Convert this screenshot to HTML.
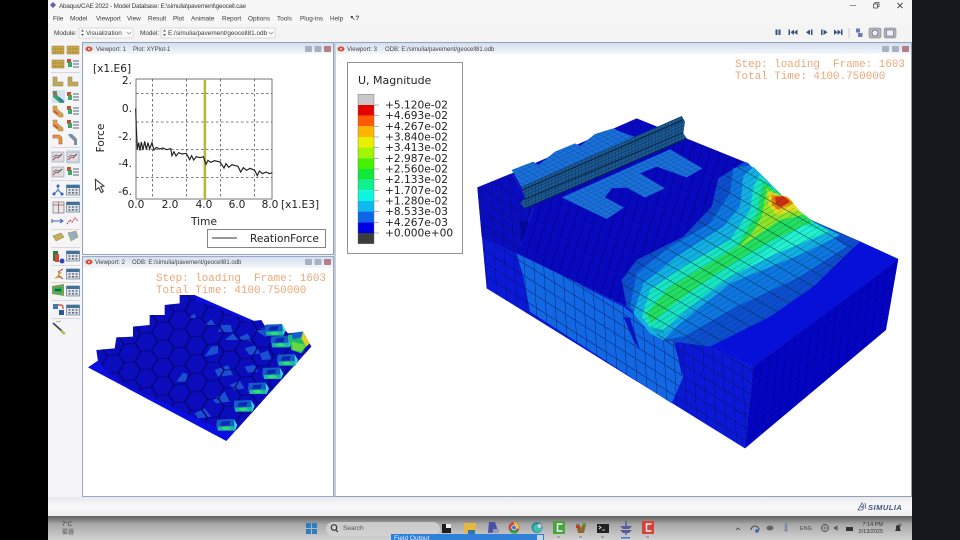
<!DOCTYPE html>
<html><head><meta charset="utf-8"><title>Abaqus/CAE 2022</title>
<style>html,body{margin:0;padding:0;background:#000;width:960px;height:540px;overflow:hidden}svg{display:block;filter:blur(.3px)}
.m{font:6.4px "Liberation Sans",sans-serif;fill:#3a3a3a}
.d{font:10.6px "DejaVu Sans","Liberation Sans",sans-serif;fill:#222}
.o{font:10.9px "Liberation Mono",monospace;fill:#eba878}
.t{font:6px "Liberation Sans",sans-serif;fill:#444}
</style></head><body>
<svg width="960" height="540" viewBox="0 0 960 540" xmlns="http://www.w3.org/2000/svg">
<defs>
<linearGradient id="tb" x1="0" y1="0" x2="0" y2="1"><stop offset="0" stop-color="#d3deee"/><stop offset="1" stop-color="#f4f7fb"/></linearGradient>
<linearGradient id="task" x1="0" y1="0" x2="0" y2="1"><stop offset="0" stop-color="#5f5f5f"/><stop offset=".35" stop-color="#a9a9a9"/><stop offset="1" stop-color="#d2d2d2"/></linearGradient>
<linearGradient id="bot" x1="0" y1="0" x2="0" y2="1"><stop offset="0" stop-color="#e9e9ec"/><stop offset=".5" stop-color="#fafafa"/><stop offset="1" stop-color="#ececec"/></linearGradient>
<pattern id="gL" patternUnits="userSpaceOnUse" width="100" height="100" patternTransform="matrix(.3 .19 .02 .38 50 535)"><path d="M0 0H100M0 0V100" stroke="#021058" stroke-width="9" opacity=".85" fill="none"/></pattern>
<pattern id="gR" patternUnits="userSpaceOnUse" width="100" height="100" patternTransform="matrix(.25 -.19 .02 -.2 825 1015)"><path d="M0 0H100M0 0V100" stroke="#000068" stroke-width="10" opacity=".85" fill="none"/></pattern>
<pattern id="gS" patternUnits="userSpaceOnUse" width="100" height="100" patternTransform="matrix(.24 .16 -.3 1 140 430)"><path d="M0 0V100" stroke="#000060" stroke-width="11" opacity=".85" fill="none"/></pattern>
<pattern id="gT" patternUnits="userSpaceOnUse" width="100" height="100" patternTransform="matrix(-.38 .24 .14 .08 575 680)"><path d="M0 0H100M0 0V100" stroke="#022838" stroke-width="9" opacity=".8" fill="none"/></pattern>
<pattern id="gP" patternUnits="userSpaceOnUse" width="100" height="100" patternTransform="matrix(.15 -.07 .12 .07 280 262)"><path d="M0 0H100M0 0V100" stroke="#063080" stroke-width="9" fill="none"/></pattern>
<pattern id="gRail" patternUnits="userSpaceOnUse" width="100" height="100" patternTransform="matrix(.1 -.044 0 .1 155 230)"><path d="M0 0V100M0 0H100" stroke="#082442" stroke-width="18" fill="none"/></pattern>
<pattern id="gH" patternUnits="userSpaceOnUse" width="100" height="100" patternTransform="matrix(.5 -.33 .5 .22 145 320)"><path d="M33 33L66 66M33 33L-33 66M33 33L66 -33M66 66L133 33M66 66L33 133" stroke="#05057a" stroke-width="7" fill="none"/></pattern>
<g id="tbl"><rect x="-6.5" y="-5" width="13" height="10" fill="#dfe4ea" stroke="#64798f" stroke-width=".7"/><rect x="-6.5" y="-5" width="13" height="3" fill="#3f7199"/><path d="M-4.5 0h2M-1 0h2M2.500 0h2M-4.500 2.800h2M-1 2.800h2M2.500 2.800h2" stroke="#556" stroke-width="1.300"/></g>
<g id="lst"><rect x="-6" y="-5" width="4" height="4" fill="#d04c2c"/><rect x="-5" y="-2" width="4" height="5" fill="#3ca868"/><path d="M0 -3h6M0 0h6M0 3h6" stroke="#567" stroke-width="1"/></g>
<g id="gold"><rect x="-6" y="-4" width="12" height="8" fill="#d6b04c" stroke="#8d7a3c" stroke-width=".5"/><path d="M-6 -1h12M-6 2h12M-3 -4v8M0 -4v8M3 -4v8" stroke="#8a7a38" stroke-width=".5"/></g>
<g id="ell"><path d="M-5 -5h4v5h6v4h-10z" fill="#bfa95a" stroke="#91854c" stroke-width=".5"/></g>
<g id="cont"><path d="M-5 -5h4v3l6 5v3h-4l-6-5z" fill="#d8a04a" stroke="#a08040" stroke-width=".5"/><path d="M-4 0l4 3" stroke="#c44" stroke-width="1.400"/></g>
<g id="plot"><rect x="-6" y="-5" width="12" height="10" fill="#dbdfe3" stroke="#889" stroke-width=".5"/><path d="M-5 3l3-3 2 1 4-4" stroke="#b23a30" fill="none" stroke-width=".9"/><path d="M-5 0l3-2 3 1 3-2" stroke="#556" fill="none" stroke-width=".7"/></g>
<g id="cell"><polygon points="-28,-16 22,-18 31,4 26,17 -25,17 -30,2" fill="#155cc8"/><polygon points="-26,5 26,3 26,17 -25,17" fill="#1eb4a0"/><polygon points="-16,8 2,4 16,12 -6,15" fill="#30e070"/><polygon points="-14,-10 12,-12 8,1 -18,2" fill="#0a28b4"/><polygon points="22,-18 33,0 26,17" fill="#34d8e0"/></g>
</defs>

<!-- backgrounds -->
<rect width="960" height="540" fill="#000"/>
<rect x="912" width="48" height="540" fill="#14181c"/>
<rect x="48" width="864" height="518" fill="#f3f3f5"/>
<rect x="48" y="0" width="864" height="24" fill="#f7f7f8"/>
<rect x="48" y="24" width="864" height="18" fill="#f4f4f5"/>
<rect x="48" y="497" width="864" height="20" fill="url(#bot)"/>
<rect x="48" y="516" width="864" height="24" fill="url(#task)"/>

<!-- title bar -->
<g>
<path d="M50 5l3-3 3 3-3 3z" fill="#6a5fa8"/>
<text class="m" x="59" y="8" textLength="187">Abaqus/CAE 2022 - Model Database: E:\simulia\pavement\geocell.cae</text>
<path d="M850 5.500h6" stroke="#777" stroke-width=".8"/>
<path d="M873.500 4h4v4h-4zM875 4v-1.500h4v4h-1.500" stroke="#444" stroke-width=".8" fill="none"/>
<path d="M897.500 3l5 5M902.500 3l-5 5" stroke="#444" stroke-width=".9"/>
<text class="m" x="53" y="20.500">File</text><text class="m" x="70" y="20.500">Model</text><text class="m" x="96" y="20.500">Viewport</text><text class="m" x="127" y="20.500">View</text><text class="m" x="148" y="20.500">Result</text><text class="m" x="173" y="20.500">Plot</text><text class="m" x="191" y="20.500">Animate</text><text class="m" x="222" y="20.500">Report</text><text class="m" x="248" y="20.500">Options</text><text class="m" x="277" y="20.500">Tools</text><text class="m" x="300" y="20.500">Plug-ins</text><text class="m" x="330" y="20.500">Help</text>
<text class="m" x="350" y="20" style="font-weight:bold">↖?</text>
<text class="m" x="54" y="35">Module:</text>
<rect x="79" y="28" width="54" height="10" fill="#fafafa" stroke="#c9c9c9" stroke-width=".6"/>
<path d="M81 31.500l1.500-2 1.500 2zM81 34l1.500 2 1.500-2z" fill="#555"/>
<text class="m" x="86" y="35">Visualization</text>
<path d="M127 32l2 2 2-2" stroke="#888" fill="none" stroke-width=".7"/>
<text class="m" x="140" y="35">Model:</text>
<rect x="161" y="28" width="114" height="10" fill="#fafafa" stroke="#c9c9c9" stroke-width=".6"/>
<path d="M163 31.500l1.500-2 1.500 2zM163 34l1.500 2 1.500-2z" fill="#555"/>
<text class="m" x="168" y="35">E:/simulia/pavement/geocell81.odb</text>
<path d="M269 32l2 2 2-2" stroke="#888" fill="none" stroke-width=".7"/>
<!-- playback -->
<path d="M775.500 29.500h2v5.500h-2zM778.500 29.500h2v5.500h-2z" fill="#37527e"/>
<path d="M788.500 29.500h1.500v5.500h-1.500zM794 29.500v5.500l-3.500-2.750zM797.500 29.500v5.500l-3.500-2.750z" fill="#37527e"/>
<path d="M810 29.500v5.500l-4-2.750zM811 29.500h1.500v5.500H811z" fill="#37527e"/>
<path d="M821 29.500h1.500v5.500H821zM823.500 29.500v5.500l4-2.750z" fill="#37527e"/>
<path d="M834 29.500v5.500l3.500-2.750zM837.500 29.500v5.500l3.500-2.750zM841 29.500h1.500v5.500H841z" fill="#37527e"/>
<path d="M849 28v10" stroke="#bbb" stroke-width=".7"/>
<rect x="856" y="28.500" width="4" height="4" fill="#6a7fb0"/><rect x="858" y="33" width="4.500" height="4" fill="#6a7fb0"/>
<rect x="869" y="28" width="12" height="10" rx="1.500" fill="#b4b8bc" stroke="#777" stroke-width=".5"/><circle cx="875" cy="33" r="3" fill="#eef" stroke="#667" stroke-width=".8"/>
<rect x="884" y="28" width="12" height="10" rx="1.500" fill="#b4b8bc" stroke="#777" stroke-width=".5"/><rect x="886.500" y="30" width="7" height="6" fill="#eef" stroke="#667" stroke-width=".6"/>
</g>

<!-- left toolbar -->
<rect x="48" y="42" width="34" height="455" fill="#f5f5f7"/>
<path d="M51 72.500h29M51 147.500h29M51 180.500h29M51 197.500h29M51 229.500h29M51 247.500h29M51 265.500h29M51 282.500h29M51 300.500h29M51 318.500h29" stroke="#cfcfd2" stroke-width=".7"/>
<use href="#gold" x="58" y="50"/><use href="#gold" x="73" y="50"/>
<use href="#gold" x="58" y="64"/><use href="#lst" x="73" y="64"/>
<use href="#ell" x="58" y="82"/><use href="#ell" x="73" y="82"/>
<rect x="52" y="90" width="13" height="13" fill="#d5e2f0"/>
<path d="M53 91h4v4l7 6v2h-4l-7-6z" fill="#3aa070"/><path d="M53 92l4 3" stroke="#e04a30" stroke-width="1.500"/><path d="M59 98l4 3" stroke="#2a60d0" stroke-width="1.500"/>
<use href="#lst" x="73" y="97"/>
<use href="#cont" x="58" y="111"/><use href="#lst" x="73" y="111"/>
<use href="#cont" x="58" y="125"/><use href="#lst" x="73" y="125"/>
<path d="M53 135h5a4 4 0 0 1 4 4v5h-3v-4a2 2 0 0 0-2-2h-4z" fill="#d4a048" stroke="#c04030" stroke-width=".6"/>
<path d="M68 134h4l5 5v6h-3v-4l-5-5z" fill="#7a8fa0"/>
<use href="#plot" x="58" y="157"/><rect x="66" y="150" width="14" height="14" fill="#d5e2f0"/><use href="#plot" x="73" y="157"/>
<use href="#plot" x="58" y="172"/><use href="#lst" x="73" y="172"/>
<path d="M58 186v4M58 190l-4 4M58 190l4 4" stroke="#3a6fb0" stroke-width="1"/><circle cx="58" cy="186" r="1.500" fill="#2a66c0"/><circle cx="54" cy="194" r="1.500" fill="#2a66c0"/><circle cx="62" cy="194" r="1.500" fill="#2a66c0"/>
<use href="#tbl" x="73" y="190"/>
<rect x="53" y="202" width="11" height="11" fill="#e8e8ea" stroke="#777" stroke-width=".7"/><path d="M53 205h11M58.500 202v11" stroke="#a05a50" stroke-width=".8"/>
<use href="#tbl" x="73" y="207"/>
<path d="M52 221h10M60 219l3 2-3 2M52 219v4" stroke="#3c5fb8" stroke-width="1" fill="none"/>
<path d="M67 224l3-4 2 2 3-4 3 3" stroke="#c83a34" stroke-width="1.200" stroke-dasharray="1.500 1" fill="none"/>
<path d="M53 236l8-3 3 4-8 4z" fill="#c8b050" stroke="#7a7a4a" stroke-width=".5"/>
<path d="M68 233l8-2 2 6-7 4z" fill="#8fb0c8" stroke="#b8a050" stroke-width=".7"/>
<rect x="53" y="251" width="5" height="10" fill="#2e7a3e"/><rect x="55" y="254" width="4" height="8" fill="#d24a30"/><circle cx="62" cy="261" r="2.500" fill="#34b"/><use href="#tbl" x="73" y="256"/>
<path d="M54 279l4-4v-3h4l-3 3 3 2-4 1z" fill="#c8a84c"/><path d="M58 272l5-3M59 276l4 3" stroke="#c8342c" stroke-width="1"/><use href="#tbl" x="73" y="274"/>
<path d="M52 286l12-2v12l-12-2z" fill="#7aa050"/><path d="M54 288l8-1v6l-8-1z" fill="#1bb070"/><path d="M55 290h6" stroke="#162" stroke-width="2"/><use href="#tbl" x="73" y="291"/>
<rect x="53" y="304" width="5" height="5" fill="#3c7ab0"/><path d="M58 305h3a2 2 0 0 1 2 2v2" stroke="#c8342c" stroke-width="1.200" fill="none"/><rect x="59" y="310" width="5" height="5" fill="#2a5a90"/><use href="#tbl" x="73" y="310"/>
<path d="M53 323l10 9" stroke="#3a3f48" stroke-width="1.600"/><path d="M61 331l4 3" stroke="#b8c04a" stroke-width="2.500"/><path d="M56 322l5-1" stroke="#999" stroke-width=".8"/>

<!-- viewport frames -->
<rect x="82.500" y="42.500" width="251" height="212" fill="#fff" stroke="#93a2b6"/>
<rect x="83" y="43" width="250" height="11" fill="url(#tb)"/>
<rect x="82.500" y="256.500" width="251" height="240" fill="#fff" stroke="#9aa8cf"/>
<rect x="83" y="257" width="250" height="11" fill="url(#tb)"/>
<rect x="335" y="42.500" width="576.500" height="454" fill="#fff" stroke="#93a2b6"/>
<rect x="336" y="43" width="575" height="11" fill="url(#tb)"/>

<g><ellipse cx="89" cy="49" rx="3.500" ry="2.500" fill="#d8502a"/><circle cx="89" cy="49" r="1" fill="#fde"/><text class="t" x="96" y="51">Viewport: 1</text><text class="t" x="133" y="51">Plot: XYPlot-1</text>
<rect x="305" y="46" width="7" height="6" rx="1" fill="#a5b2c2"/><rect x="314.500" y="46" width="7" height="6" rx="1" fill="#a5b2c2"/><rect x="324" y="46" width="7" height="6" rx="1" fill="#b77c84"/></g>
<g><ellipse cx="89" cy="262" rx="3.500" ry="2.500" fill="#d8502a"/><circle cx="89" cy="262" r="1" fill="#fde"/><text class="t" x="95" y="264">Viewport: 2</text><text class="t" x="132" y="264">ODB: E:/simulia/pavement/geocell81.odb</text>
<rect x="305" y="259" width="7" height="6" rx="1" fill="#a5b2c2"/><rect x="314.500" y="259" width="7" height="6" rx="1" fill="#a5b2c2"/><rect x="324" y="259" width="7" height="6" rx="1" fill="#b77c84"/></g>
<g><ellipse cx="341" cy="49" rx="3.500" ry="2.500" fill="#d8502a"/><circle cx="341" cy="49" r="1" fill="#fde"/><text class="t" x="347" y="51">Viewport: 3</text><text class="t" x="385" y="51">ODB: E:/simulia/pavement/geocell81.odb</text>
<rect x="882" y="46" width="7" height="6" rx="1" fill="#a5b2c2"/><rect x="892" y="46" width="7" height="6" rx="1" fill="#a5b2c2"/><rect x="902" y="46" width="7" height="6" rx="1" fill="#b77c84"/></g>

<!-- XY plot -->
<text class="d" x="93" y="72">[x1.E6]</text>
<text class="d" x="132" y="84" text-anchor="end">2.</text><text class="d" x="132" y="112" text-anchor="end">0.</text><text class="d" x="132" y="140" text-anchor="end">-2.</text><text class="d" x="132" y="167" text-anchor="end">-4.</text><text class="d" x="132" y="195" text-anchor="end">-6.</text>
<rect x="136" y="79" width="136" height="120" fill="#fff" stroke="#555" stroke-width=".8"/>
<path d="M152.500 79v120M186.500 79v120M220.500 79v120M254.500 79v120M136 93.500h136M136 122h136M136 149.500h136M136 177.500h136" stroke="#555" stroke-width=".8" stroke-dasharray="2.500 2.500" fill="none"/>
<rect x="203.600" y="80" width="2.600" height="119" fill="#b5b83f"/>
<g transform="translate(48 40) scale(.33333)"><path d="M263 205L265 265 268 328 272 308 276 332 280 306 285 330 290 304 295 328 300 308 305 327 312 308 318 330 325 322 335 327 345 324 355 329 368 326 372 347 378 335 384 348 392 338 402 342 415 340 425 359 431 347 437 360 445 350 456 353 466 350 474 373 480 361 488 367 500 362 516 366 528 384 534 371 542 382 552 374 570 379 578 396 586 383 596 391 606 385 620 391 628 407 634 393 644 401 654 396 664 401 673 398" fill="none" stroke="#222" stroke-width="3.500"/></g>
<text class="d" x="136" y="208" text-anchor="middle">0.0</text><text class="d" x="170" y="208" text-anchor="middle">2.0</text><text class="d" x="204" y="208" text-anchor="middle">4.0</text><text class="d" x="237" y="208" text-anchor="middle">6.0</text><text class="d" x="270" y="208" text-anchor="middle">8.0</text><text class="d" x="281" y="208">[x1.E3]</text>
<text class="d" x="204" y="225" text-anchor="middle">Time</text>
<text class="d" transform="translate(104 138) rotate(-90)" text-anchor="middle">Force</text>
<rect x="207.500" y="229.500" width="118" height="18" fill="#fff" stroke="#666" stroke-width=".8"/>
<path d="M212 238h25" stroke="#333" stroke-width="1"/><text class="d" x="250" y="242">ReationForce</text>

<!-- viewport 2 -->
<text class="o" x="156" y="281">Step: loading&#160;&#160;Frame: 1603</text>
<text class="o" x="156" y="293">Total Time: 4100.750000</text>
<g transform="translate(48 250) scale(.33333)">
<polygon points="120,352 535,573 790,288 440,135" fill="#0a0fe0"/>
<polygon points="145,300 150,335 205,390 510,535 565,540 790,290 765,245 720,250 700,228 655,235 640,210 600,215 545,190 500,170 445,155 440,135 395,135 395,160 350,165 350,195 305,195 305,225 255,230 255,260 205,262 200,295" fill="#0b0cbc"/>
<g fill="#1a50d0"><polygon points="470,320 490,290 510,288 510,310"/><polygon points="385,395 405,368 418,372 415,395"/><polygon points="510,245 520,225 548,225 555,248"/><polygon points="470,225 490,208 502,225"/><polygon points="420,205 440,190 445,205"/><polygon points="530,270 555,250 570,270"/><polygon points="565,265 600,250 610,275"/><polygon points="620,240 650,232 655,262"/><polygon points="495,450 530,425 545,455 505,460"/><polygon points="545,405 575,392 590,415 560,420"/><polygon points="590,350 620,345 630,365 600,368"/><polygon points="635,310 660,302 670,328 642,330"/><polygon points="440,490 470,475 490,500 450,505"/><polygon points="500,360 540,345 555,375 510,380"/><polygon points="590,295 625,285 635,310 605,315"/></g>
<polygon points="145,300 150,335 205,390 510,535 565,540 790,290 765,245 720,250 700,228 655,235 640,210 600,215 545,190 500,170 445,155 440,135 395,135 395,160 350,165 350,195 305,195 305,225 255,230 255,260 205,262 200,295" fill="url(#gH)"/>
<use href="#cell" x="535" y="525"/><use href="#cell" x="587" y="468"/><use href="#cell" x="630" y="415"/><use href="#cell" x="673" y="370"/><use href="#cell" x="717" y="330"/>
<use href="#cell" x="698" y="275"/><use href="#cell" x="680" y="240"/>
<polygon points="720,255 765,245 782,280 760,310 730,300" fill="#1fb870"/><polygon points="730,275 775,285 760,305 735,300" fill="#68d840"/><polygon points="765,245 785,280 775,290 760,265" fill="#e0d020"/><polygon points="730,250 765,245 760,262 735,268" fill="#1060d0"/>
</g>

<!-- legend -->
<rect x="347.500" y="62.500" width="115" height="191" fill="#fff" stroke="#777" stroke-width=".8"/>
<text class="d" x="358" y="84" style="font-size:11px">U, Magnitude</text>
<rect x="358" y="94.300" width="16" height="10.700" fill="#c8c8c8"/><rect x="358" y="105" width="16" height="10.700" fill="#e60000"/><rect x="358" y="115.600" width="16" height="10.700" fill="#ff5a00"/><rect x="358" y="126.300" width="16" height="10.700" fill="#ffb400"/><rect x="358" y="137" width="16" height="10.700" fill="#e8f000"/><rect x="358" y="147.600" width="16" height="10.700" fill="#a0f500"/><rect x="358" y="158.300" width="16" height="10.700" fill="#46f000"/><rect x="358" y="169" width="16" height="10.700" fill="#10e83c"/><rect x="358" y="179.600" width="16" height="10.700" fill="#10f090"/><rect x="358" y="190.300" width="16" height="10.700" fill="#10f5e0"/><rect x="358" y="201" width="16" height="10.700" fill="#10b8f0"/><rect x="358" y="211.600" width="16" height="10.700" fill="#0c66e8"/><rect x="358" y="222.300" width="16" height="10.700" fill="#0000e6"/><rect x="358" y="233" width="16" height="10.700" fill="#3c3c3c"/>
<path d="M358 94.300h16v149.400h-16z" fill="none" stroke="#666" stroke-width=".4"/>
<path d="M374 105h5M374 115.600h5M374 126.300h5M374 137h5M374 147.600h5M374 158.300h5M374 169h5M374 179.600h5M374 190.300h5M374 201h5M374 211.600h5M374 222.300h5M374 233h5" stroke="#666" stroke-width=".5"/>
<g><text class="d" x="385" y="108.500">+5.120e-02</text><text class="d" x="385" y="119.200">+4.693e-02</text><text class="d" x="385" y="129.800">+4.267e-02</text><text class="d" x="385" y="140.500">+3.840e-02</text><text class="d" x="385" y="151.200">+3.413e-02</text><text class="d" x="385" y="161.800">+2.987e-02</text><text class="d" x="385" y="172.500">+2.560e-02</text><text class="d" x="385" y="183.200">+2.133e-02</text><text class="d" x="385" y="193.800">+1.707e-02</text><text class="d" x="385" y="204.500">+1.280e-02</text><text class="d" x="385" y="215.200">+8.533e-03</text><text class="d" x="385" y="225.800">+4.267e-03</text><text class="d" x="385" y="236.500">+0.000e+00</text></g>
<text class="o" x="735" y="67">Step: loading&#160;&#160;Frame: 1603</text>
<text class="o" x="735" y="79">Total Time: 4100.750000</text>

<!-- 3D model -->
<g transform="translate(470 110) scale(.33333)">
<!-- left face -->
<polygon points="22,232 50,535 825,1015 850,770 720,710 470,590 140,430" fill="#0b18d6"/>
<polygon points="22,232 35,380 140,430 190,300 125,190" fill="#0a0cc0"/>
<polygon points="150,330 180,340 185,420 155,410" fill="#08089a"/>
<polygon points="140,432 160,500 180,605 605,880 640,800 615,690 540,650 460,590 350,535 250,480" fill="#1168e2"/>
<polygon points="460,620 480,625 510,720 490,690" fill="#0a14c8"/>
<polygon points="610,690 640,740 636,800 625,745" fill="#0a14c8"/>
<polygon points="640,690 655,730 645,720" fill="#0a14c8"/>
<polygon points="680,690 692,720 680,705" fill="#0a14c8"/>
<!-- right face -->
<polygon points="850,770 1285,447 1248,660 825,1015" fill="#0404c4"/>
<polygon points="850,770 1285,447 1248,660 825,1015" fill="url(#gR)"/>
<!-- top -->
<polygon points="125,190 500,25 835,160 880,210 940,260 1000,320 1165,392 1285,447 850,770 720,710 470,590 140,430 190,300" fill="#0808bc"/>
<polygon points="1285,447 1170,395 1100,470 1000,520 900,620 720,710 850,770" fill="#0610d8"/>
<polygon points="165,295 650,85 830,160 745,205 725,290 640,380 500,450 455,510 470,590 140,430" fill="url(#gS)"/>
<polygon points="22,232 50,535 825,1015 850,770 720,710 470,590 140,430 165,295 125,190" fill="url(#gL)"/>
<!-- bands -->
<polygon points="825,155 745,205 725,290 640,380 500,450 455,510 470,590 540,650 575,690 720,710 900,620 1030,530 1170,395 1000,320 940,260 880,210 835,160" fill="#0c4ece"/>
<polygon points="840,165 790,175 780,250 720,340 600,410 500,490 480,590 545,660 575,690 640,680 800,590 990,500 1130,410 1000,320 880,205" fill="#0d76e0"/>
<polygon points="850,170 820,200 810,290 760,350 620,440 520,520 490,610 540,670 580,690 630,640 780,520 1000,430 1110,375 1000,320 880,200" fill="#12b0e2"/>
<polygon points="870,195 850,230 840,300 780,390 640,470 540,540 515,620 545,660 580,660 660,590 780,500 920,430 1080,365 1000,320" fill="#18e4c0"/>
<polygon points="880,215 870,250 860,310 800,410 700,470 600,530 530,610 545,640 600,590 740,490 900,395 1030,335 985,300 940,260" fill="#22de60"/>
<polygon points="820,480 900,440 1010,390 1060,365 1000,345 880,430" fill="#22f0d0"/>
<polygon points="890,235 885,270 875,320 850,365 800,420 870,370 930,330 1000,315 960,270" fill="#8ee428"/>
<polygon points="895,245 895,285 920,315 985,300 960,265" fill="#e4dc20"/>
<polygon points="905,255 905,285 925,300 970,280 950,260" fill="#e88010"/>
<polygon points="915,262 918,282 935,290 960,275 940,258" fill="#c83010"/>
<polygon points="825,155 745,205 725,290 640,380 500,450 455,510 470,590 540,650 575,690 720,710 900,620 1030,530 1170,395 1000,320 940,260 880,210 835,160" fill="url(#gT)"/>
<polygon points="540,650 582,660 582,672 545,660" fill="#0a90b0" opacity=".6"/>
<!-- geocell patches -->
<polygon points="125,180 190,155 205,165 255,125 315,100 330,108 375,72 430,55 450,65 520,90 165,250" fill="#1970d8"/>
<polygon points="275,262 600,118 697,175 650,202 560,170 510,190 585,235 525,263 470,233 425,235 405,262 462,293 410,327" fill="#1970d8"/>
<polygon points="125,180 190,155 205,165 255,125 315,100 330,108 375,72 430,55 450,65 520,90 165,250" fill="url(#gP)"/>
<polygon points="275,262 600,118 697,175 650,202 560,170 510,190 585,235 525,263 470,233 425,235 405,262 462,293 410,327" fill="url(#gP)"/>
<!-- rail -->
<polygon points="155,230 635,18 645,35 640,70 650,85 165,295 150,280 165,265" fill="#1b5a94"/>
<polygon points="155,230 635,18 645,35 640,70 650,85 165,295 150,280 165,265" fill="url(#gRail)"/>
<path d="M157 240L640 30M165 268L640 68M165 295L650 85" stroke="#082440" stroke-width="3" fill="none"/>
</g>

<!-- cursor -->
<g transform="translate(48 40) scale(.33333)"><path d="M142 418L143 450 152 443 160 458 166 454 158 440 168 438z" fill="#f4f4f4" stroke="#333" stroke-width="3"/></g>

<!-- SIMULIA -->
<path d="M858 510l4-7 2 3-3 1 3 1-2 2zM865 503l1 6" stroke="#4a5f8a" stroke-width=".8" fill="none"/>
<text x="868" y="510" font-family="Liberation Sans, sans-serif" font-size="7.500" font-weight="bold" font-style="italic" fill="#3a5585" letter-spacing=".5">SIMULIA</text>

<!-- taskbar -->
<text x="62" y="526" font-family="Liberation Sans, sans-serif" font-size="6" fill="#444">7°C</text>
<text x="62" y="534" font-family="'Liberation Sans','Noto Sans CJK SC',sans-serif" font-size="6" fill="#555">雾霾</text>
<path d="M306 523h5v5h-5zM312 523h5v5h-5zM306 529h5v5h-5zM312 529h5v5h-5z" fill="#2b7fc3"/>
<rect x="326" y="522" width="114" height="14" rx="7" fill="#d4d4d4" opacity=".8"/>
<circle cx="334" cy="527.500" r="2.800" fill="none" stroke="#222" stroke-width="1"/><path d="M336 530l2 2" stroke="#222" stroke-width="1"/>
<text x="343" y="530" font-family="Liberation Sans, sans-serif" font-size="6.500" fill="#555">Search</text>
<rect x="442" y="524" width="9" height="9" fill="#1c1c1c"/><rect x="446" y="524" width="5" height="4" fill="#eee"/>
<rect x="464" y="523" width="12" height="10" fill="#e8b83c"/><rect x="468" y="530" width="7" height="4" fill="#2a7ab0"/>
<path d="M489 522h6l2 6 2 4-11 1z" fill="#4b4fa8"/><rect x="493" y="529" width="6" height="4" fill="#9a9ab0"/>
<circle cx="514" cy="527.500" r="5.500" fill="#c44"/><path d="M514 527.500L509.500 531a5.500 5.500 0 0 0 9 .5z" fill="#3a9a4a"/><path d="M514 522a5.500 5.500 0 0 1 5 7l-5-1.500z" fill="#e2bb30"/><circle cx="514" cy="527.500" r="2.300" fill="#3a76c8" stroke="#fff" stroke-width=".7"/>
<circle cx="537" cy="527.500" r="5.500" fill="#2a8a9f"/><path d="M534 531a4 4 0 0 1 7-5l1 3a5 5 0 0 1-8 2z" fill="#3cc0b0"/><circle cx="539.500" cy="526" r="2" fill="#d0d0d0"/>
<rect x="553" y="521" width="12" height="13" fill="#4aa43c"/><path d="M562.500 524h-5v7h5" stroke="#eef" stroke-width="1.500" fill="none"/>
<path d="M576 524h3l2 4 2-5 3 1-2 9h-6z" fill="#8a6a30"/><rect x="576" y="526" width="4" height="2" fill="#c8342c"/><rect x="583" y="523" width="3" height="3" fill="#5a9a30"/>
<rect x="597" y="524" width="12" height="9" fill="#222"/><path d="M599 526l2 1.500-2 1.500M602 530h3" stroke="#eee" stroke-width=".8" fill="none"/>
<path d="M620 526h12l-3 3h-6zM620 530h12l-3 3h-6z" fill="#5a5a98"/><path d="M626 521v5M626 531v4" stroke="#5a5a98" stroke-width="1.500"/>
<rect x="621" y="537" width="9" height="1.500" fill="#3a7ec0"/>
<rect x="642" y="521" width="12" height="13" fill="#d8403c"/><path d="M651.500 524h-5v7h5" stroke="#fee" stroke-width="1.500" fill="none"/>
<path d="M557 537h3M579 537h3M601 537h3M646 537h3" stroke="#666" stroke-width=".8"/>
<rect x="391" y="534" width="153" height="6" fill="#2e80d8"/><text x="394" y="540" font-family="Liberation Sans, sans-serif" font-size="6.500" fill="#e8eefc">Field Output</text><rect x="537" y="535" width="6" height="5" fill="#c8d4e8"/>
<path d="M736 530l2-2 2 2" stroke="#444" fill="none" stroke-width=".8"/>
<path d="M751 530a4 4 0 0 1 8 0" stroke="#444" fill="none" stroke-width="1"/><circle cx="757" cy="531" r="1.800" fill="#2a66c0"/>
<ellipse cx="770" cy="528" rx="3.500" ry="2.500" fill="#666"/><path d="M786 523v6" stroke="#7a8aa8" stroke-width="2.500"/><path d="M784 530h4M786 530v2" stroke="#667" stroke-width=".7"/>
<text x="800" y="530" font-family="Liberation Sans, sans-serif" font-size="5.500" fill="#444">ENG</text>
<circle cx="825" cy="528" r="3.500" fill="none" stroke="#444" stroke-width=".8"/><path d="M821.500 528h7M825 524.500v7" stroke="#444" stroke-width=".5"/>
<path d="M834 527h1.500l2-2v6l-2-2H834z" fill="#555"/><path d="M846 527h7v4h-7z" fill="#333"/>
<text x="883" y="526" text-anchor="end" font-family="Liberation Sans, sans-serif" font-size="5.500" fill="#333">7:14 PM</text>
<text x="883" y="533" text-anchor="end" font-family="Liberation Sans, sans-serif" font-size="5.500" fill="#333">2/13/2025</text>
<path d="M895 531h6l-1-2v-2a2 2 0 0 0-4 0v2z" fill="#333"/><circle cx="900" cy="525" r="1.500" fill="#666"/>
</svg>
</body></html>
